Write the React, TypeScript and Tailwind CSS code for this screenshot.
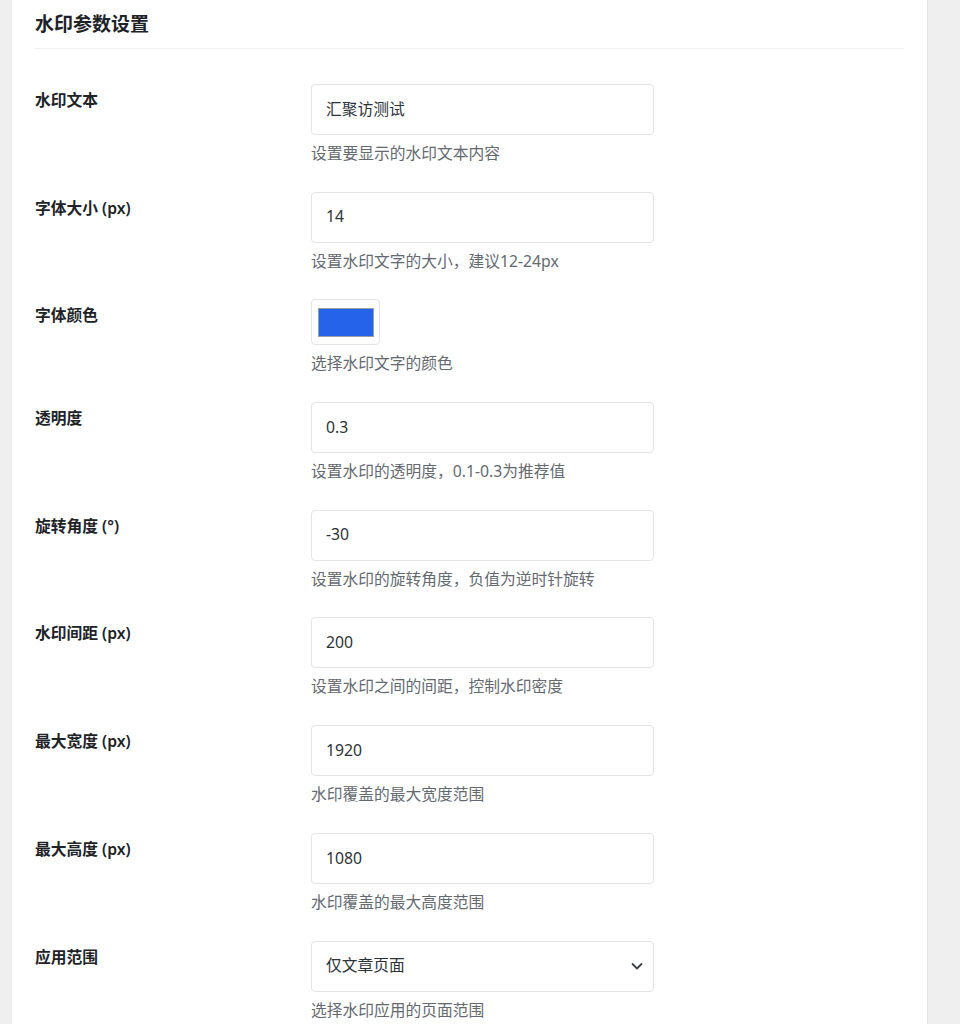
import React from 'react';

// ── Field definitions ─────────────────────────────────────────────────────────
type Field = {
  label: string;
  kind: 'text' | 'color' | 'select';
  value: string;
  hint: string;
};

const FIELDS: Field[] = [
  { label: '水印文本', kind: 'text', value: '汇聚访测试', hint: '设置要显示的水印文本内容' },
  { label: '字体大小 (px)', kind: 'text', value: '14', hint: '设置水印文字的大小，建议12-24px' },
  { label: '字体颜色', kind: 'color', value: '#2563eb', hint: '选择水印文字的颜色' },
  { label: '透明度', kind: 'text', value: '0.3', hint: '设置水印的透明度，0.1-0.3为推荐值' },
  { label: '旋转角度 (°)', kind: 'text', value: '-30', hint: '设置水印的旋转角度，负值为逆时针旋转' },
  { label: '水印间距 (px)', kind: 'text', value: '200', hint: '设置水印之间的间距，控制水印密度' },
  { label: '最大宽度 (px)', kind: 'text', value: '1920', hint: '水印覆盖的最大宽度范围' },
  { label: '最大高度 (px)', kind: 'text', value: '1080', hint: '水印覆盖的最大高度范围' },
  { label: '应用范围', kind: 'select', value: '仅文章页面', hint: '选择水印应用的页面范围' },
];

const Control: React.FC<{ field: Field }> = ({ field }) => {
  if (field.kind === 'color') {
    return (
      <div className="w-[69px] h-[46px] border border-[#e2e4e7] rounded-[4px] bg-white flex items-center justify-center">
        <div className="w-[56px] h-[29px] border border-[#9aa0a6] bg-[#2563eb]" />
      </div>
    );
  }
  if (field.kind === 'select') {
    return (
      <div className="w-[343px] h-[51px] border border-[#e2e4e7] rounded-[4px] bg-white flex items-center justify-between pl-[14px] pr-[10px] text-[15.75px] text-[#2c3338]">
        <span>{field.value}</span>
        <svg width="12" height="12" viewBox="0 0 12 12" fill="none" stroke="#3c434a" strokeWidth="1.8" strokeLinecap="round" strokeLinejoin="round">
          <path d="M1.5 4l4.5 4.5L10.5 4" />
        </svg>
      </div>
    );
  }
  return (
    <div className="w-[343px] h-[51px] border border-[#e2e4e7] rounded-[4px] bg-white flex items-center pl-[14px] text-[15.75px] text-[#2c3338]">
      {field.value}
    </div>
  );
};

export default function App() {
  return (
    <div
      className="min-h-screen bg-[#efefef] pl-[12px] pr-[32px]"
      style={{ fontFamily: '"Noto Sans", "Noto Sans CJK SC", sans-serif' }}
    >
      <div className="bg-white border-r border-[#e3e3e3] min-h-screen px-[23px]">
        {/* Section heading */}
        <h2 className="text-[19px] leading-[28px] font-bold text-[#1d2327] pt-[10px] pb-[10px] border-b border-[#f0f0f1]">
          水印参数设置
        </h2>

        <div className="pt-[22px]">
          {FIELDS.map((f) => (
            <div key={f.label} className="flex pt-[13px] pb-[13.7px]">
              <div className="w-[276px] shrink-0 pt-[4px] text-[15.75px] leading-[24px] font-semibold text-[#1d2327]">
                {f.label}
              </div>
              <div>
                <Control field={f} />
                <p className="mt-[6px] text-[15.75px] leading-[24px] text-[#646970]">{f.hint}</p>
              </div>
            </div>
          ))}
        </div>
      </div>
    </div>
  );
}
